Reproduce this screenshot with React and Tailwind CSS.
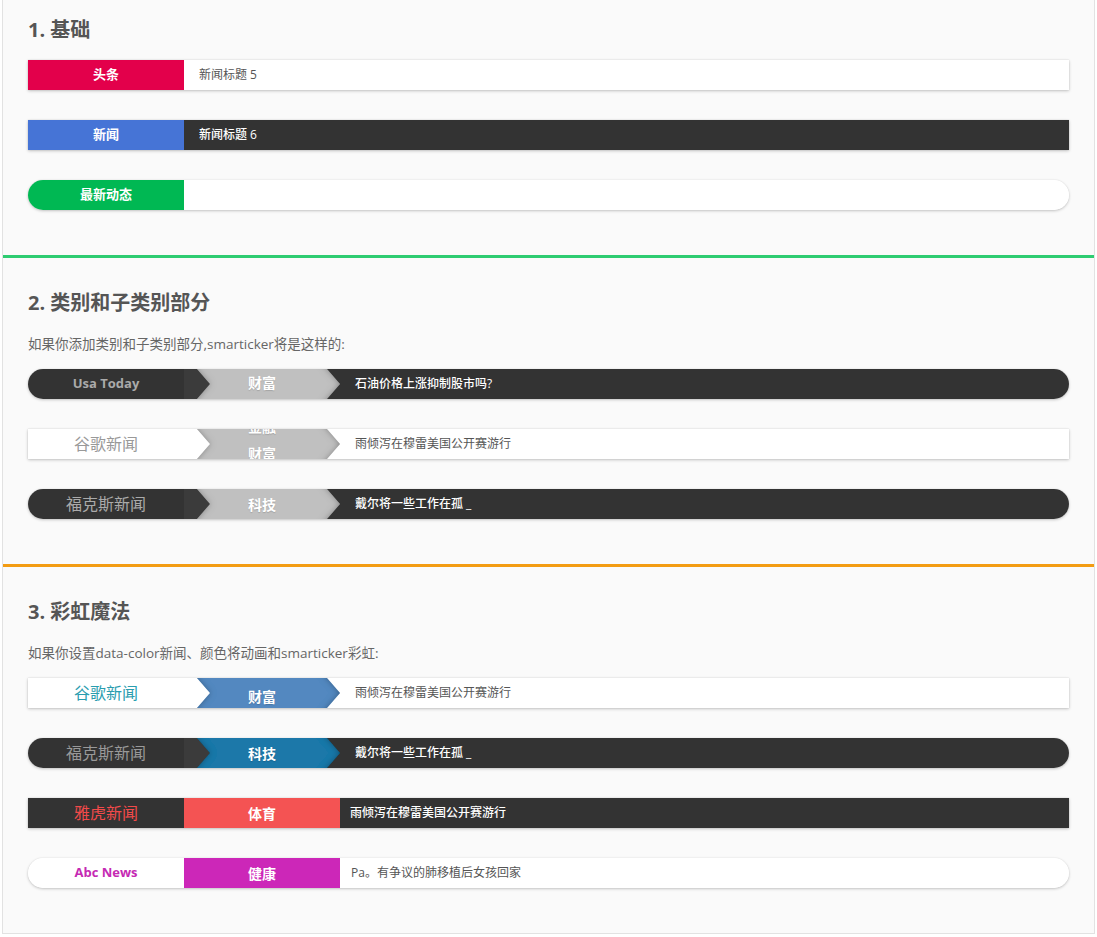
import React from "react";

const FONT = { fontFamily: '"Open Sans","Noto Sans CJK SC",sans-serif' };

function ChevronShape({ fill }) {
  return (
    <svg className="absolute inset-0" width="156" height="30" viewBox="0 0 156 30">
      <polygon
        points="4.33,-10 134.33,-10 156,15 134.33,40 4.33,40 26,15"
        fill={fill}
        filter="url(#innerShade)"
      />
    </svg>
  );
}

function Chevron({ fill, stripClass, bodyClass, children }) {
  return (
    <div className={`relative h-full w-[156px] shrink-0 overflow-hidden ${bodyClass}`}>
      <div className={`absolute left-0 top-0 h-full w-[26px] ${stripClass}`} />
      <ChevronShape fill={fill} />
      {children}
    </div>
  );
}

function CatText({ children, className = "" }) {
  return (
    <div className={`absolute inset-0 flex items-center justify-center text-[14px] font-bold text-white ${className}`} style={{ textShadow: "0 1px 1px rgba(0,0,0,0.15)" }}>
      {children}
    </div>
  );
}

function Row({ rounded, children }) {
  return (
    <div
      className={`flex h-[30px] overflow-hidden shadow-[0_1px_3px_rgba(0,0,0,0.22),0_0_1px_rgba(0,0,0,0.15)] ${rounded ? "rounded-[15px]" : ""}`}
    >
      {children}
    </div>
  );
}

function Label({ className, children }) {
  return (
    <div className={`flex h-full w-[156px] shrink-0 items-center justify-center ${className}`}>{children}</div>
  );
}

function Body({ className, children }) {
  return (
    <div className={`flex h-full flex-1 items-center text-[12px] ${className}`}>{children}</div>
  );
}

function Title({ children, className = "" }) {
  return <h2 className={`h-[28px] text-[20px] font-bold leading-[28px] text-[#555] ${className}`}>{children}</h2>;
}

function Para({ children }) {
  return <p className="mt-[17px] h-[20px] text-[13.5px] leading-[20px] text-[#666]">{children}</p>;
}

export default function App() {
  return (
    <div className="min-h-[937px] bg-white" style={FONT}>
      <svg width="0" height="0" className="absolute">
        <defs>
          <filter id="innerShade" x="-20%" y="-100%" width="140%" height="300%">
            <feComponentTransfer in="SourceAlpha" result="inv">
              <feFuncA type="table" tableValues="1 0" />
            </feComponentTransfer>
            <feGaussianBlur in="inv" stdDeviation="3" result="blur" />
            <feFlood floodColor="#000" floodOpacity="0.6" result="col" />
            <feComposite in="col" in2="blur" operator="in" result="sh" />
            <feComposite in="sh" in2="SourceAlpha" operator="in" result="inner" />
            <feMerge>
              <feMergeNode in="SourceGraphic" />
              <feMergeNode in="inner" />
            </feMerge>
          </filter>
        </defs>
      </svg>
      <div className="ml-[2px] w-[1093px] border-x border-b border-[#e2e2e2] bg-[#fafafa]">
        {/* Section 1 */}
        <section className="px-[25px] pt-[16px] pb-[45px]">
          <Title>1. 基础</Title>
          <div className="mt-[16px] flex flex-col gap-[30px]">
            <Row>
              <Label className="bg-[#e3004b] text-[13px] font-bold text-white">头条</Label>
              <Body className="bg-white pl-[15px] text-[#555]">新闻标题 5</Body>
            </Row>
            <Row>
              <Label className="bg-[#4674d6] text-[13px] font-bold text-white">新闻</Label>
              <Body className="bg-[#333] pl-[15px] font-medium text-white">新闻标题 6</Body>
            </Row>
            <Row rounded>
              <Label className="bg-[#00b853] text-[13px] font-bold text-white">最新动态</Label>
              <Body className="bg-white pl-[15px] text-[#555]"></Body>
            </Row>
          </div>
        </section>
        <div className="h-[3px] bg-[#2ecc71]" />

        {/* Section 2 */}
        <section className="px-[25px] pt-[31px] pb-[45px]">
          <Title>2. 类别和子类别部分</Title>
          <Para>如果你添加类别和子类别部分,smarticker将是这样的:</Para>
          <div className="mt-[15px] flex flex-col gap-[30px]">
            <Row rounded>
              <Label className="bg-[#333] text-[13px] font-bold text-[#aaa]">Usa Today</Label>
              <Chevron fill="#c0c0c0" stripClass="bg-[#3b3b3b]" bodyClass="bg-[#333]">
                <CatText className="-translate-y-[2px]">财富</CatText>
              </Chevron>
              <Body className="bg-[#333] pl-[15px] font-medium text-white">石油价格上涨抑制股市吗?</Body>
            </Row>
            <Row>
              <Label className="bg-white text-[16px] text-[#999]">谷歌新闻</Label>
              <Chevron fill="#c0c0c0" stripClass="bg-white" bodyClass="bg-white">
                <div className="absolute left-0 top-[-16px] w-full text-[14px] font-bold text-white" style={{ textShadow: "0 1px 1px rgba(0,0,0,0.15)" }}>
                  <div className="flex h-[27px] items-center justify-center">金融</div>
                  <div className="flex h-[27px] items-center justify-center">财富</div>
                </div>
              </Chevron>
              <Body className="bg-white pl-[15px] text-[#555]">雨倾泻在穆雷美国公开赛游行</Body>
            </Row>
            <Row rounded>
              <Label className="bg-[#333] text-[16px] text-[#aaa]">福克斯新闻</Label>
              <Chevron fill="#c0c0c0" stripClass="bg-[#3b3b3b]" bodyClass="bg-[#333]">
                <CatText>科技</CatText>
              </Chevron>
              <Body className="bg-[#333] pl-[15px] font-medium text-white">戴尔将一些工作在孤 _</Body>
            </Row>
          </div>
        </section>
        <div className="h-[3px] bg-[#f39c12]" />

        {/* Section 3 */}
        <section className="px-[25px] pt-[31px] pb-[45px]">
          <Title>3. 彩虹魔法</Title>
          <Para>如果你设置data-color新闻、颜色将动画和smarticker彩虹:</Para>
          <div className="mt-[15px] flex flex-col gap-[30px]">
            <Row>
              <Label className="bg-white text-[16px] text-[#2a9daf]">谷歌新闻</Label>
              <Chevron fill="#5288c0" stripClass="bg-white" bodyClass="bg-white">
                <CatText className="translate-y-[3px]">财富</CatText>
              </Chevron>
              <Body className="bg-white pl-[15px] text-[#555]">雨倾泻在穆雷美国公开赛游行</Body>
            </Row>
            <Row rounded>
              <Label className="bg-[#333] text-[16px] text-[#999]">福克斯新闻</Label>
              <Chevron fill="#1a78a9" stripClass="bg-[#3b3b3b]" bodyClass="bg-[#333]">
                <CatText>科技</CatText>
              </Chevron>
              <Body className="bg-[#333] pl-[15px] font-medium text-white">戴尔将一些工作在孤 _</Body>
            </Row>
            <Row>
              <Label className="bg-[#333] text-[16px] text-[#f24a4a]">雅虎新闻</Label>
              <div className="flex h-full w-[156px] shrink-0 items-center justify-center bg-[#f45353] text-[14px] font-bold text-white">体育</div>
              <Body className="bg-[#333] pl-[10px] font-medium text-white">雨倾泻在穆雷美国公开赛游行</Body>
            </Row>
            <Row rounded>
              <Label className="bg-white text-[13px] font-bold text-[#c52ab3]">Abc News</Label>
              <div className="flex h-full w-[156px] shrink-0 items-center justify-center bg-[#cc27b8] text-[14px] font-bold text-white">健康</div>
              <Body className="bg-white pl-[11px] text-[#555]">Pa。有争议的肺移植后女孩回家</Body>
            </Row>
          </div>
        </section>
      </div>
    </div>
  );
}
